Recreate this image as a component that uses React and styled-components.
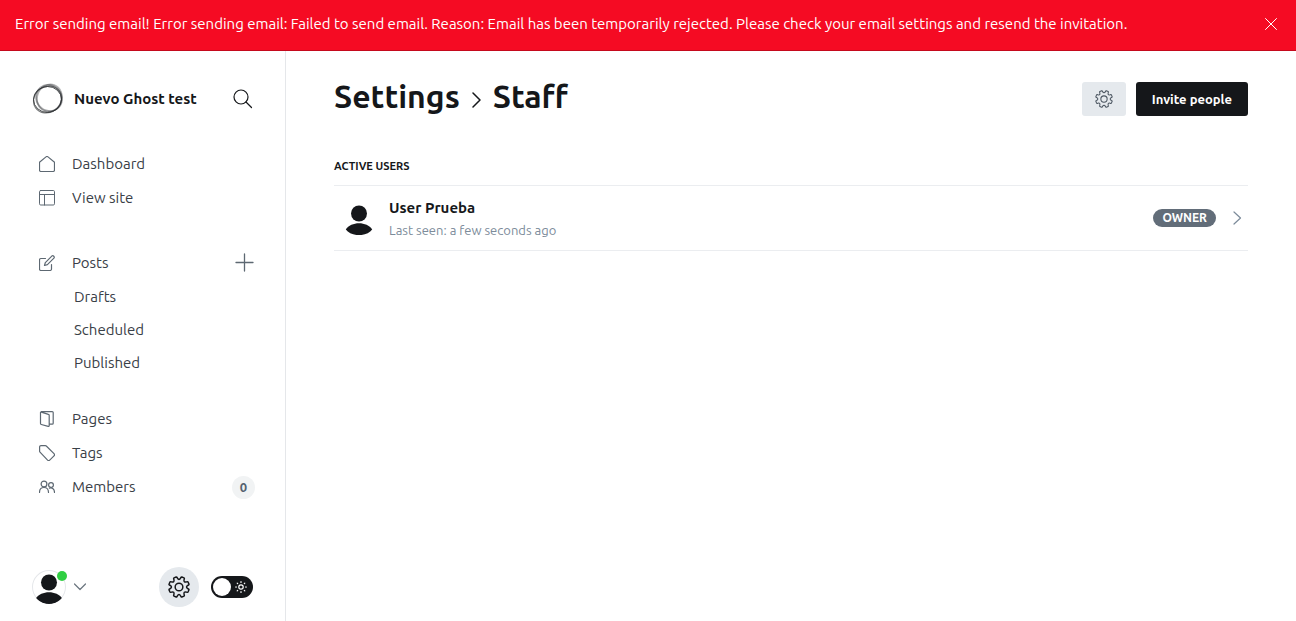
import React, { useState } from "react";
import styled, { createGlobalStyle, css } from "styled-components";

const Global = createGlobalStyle`
  *, *::before, *::after { box-sizing: border-box; }
  body {
    margin: 0;
    background: #fff;
    color: #15171a;
    font-family: Ubuntu, "Noto Sans", "Open Sans", sans-serif;
    font-size: 15px;
    line-height: 20px;
  }
  button { font: inherit; color: inherit; border: 0; padding: 0; background: none; cursor: pointer; }
  a { color: inherit; text-decoration: none; }
  svg { display: block; flex: none; }
  h1, h2, h3, p, ul { margin: 0; padding: 0; }
  ul { list-style: none; }
`;

const Page = styled.div`
  min-height: 100vh;
  display: flex;
  flex-direction: column;
`;

const Alert = styled.div`
  display: flex;
  align-items: center;
  justify-content: space-between;
  min-height: 51px;
  padding: 0 18px 2px 15px;
  background: #f50b23;
  border-bottom: 1px solid #c5091d;
  color: #fff;
`;

const AlertText = styled.p`
  font-size: 15px;
  line-height: 22px;
`;

const Body = styled.div`
  flex: 1;
  display: flex;
`;

const Sidebar = styled.aside`
  flex: none;
  width: 286px;
  display: flex;
  flex-direction: column;
  padding: 32px 32px 14px;
  border-right: 1px solid #e5e7ea;
  color: #394047;
`;

const SiteHeader = styled.header`
  display: flex;
  align-items: center;
  gap: 10px;
  height: 32px;
  color: #15171a;
`;

const SiteName = styled.strong`
  flex: 1;
  font-weight: 700;
  white-space: nowrap;
`;

const Nav = styled.nav`
  margin: 32px -2px 0 0;
`;

const NavGroup = styled.ul`
  margin-bottom: ${(p) => (p.$tight ? 23 : 31)}px;
`;

const NavRow = styled.li`
  display: flex;
  align-items: center;
  justify-content: space-between;
`;

const NavLink = styled.a`
  flex: 1;
  display: flex;
  align-items: center;
  gap: 17px;
  height: ${(p) => (p.$nested ? 33 : 34)}px;
  padding-left: ${(p) => (p.$nested ? 42 : 7)}px;
  svg { color: #5d6872; }
`;

const PlusButton = styled.button`
  color: #5d6872;
`;

const Count = styled.span`
  width: 23px;
  height: 23px;
  border-radius: 50%;
  background: #f1f3f4;
  color: #54626f;
  font-size: 13px;
  font-weight: 600;
  line-height: 23px;
  text-align: center;
`;

const SidebarFooter = styled.footer`
  display: flex;
  align-items: center;
  margin-top: auto;
  color: #15171a;
`;

const UserMenu = styled.button`
  display: flex;
  align-items: center;
  gap: 8px;
  margin-right: auto;
  color: #6b757f;
`;

const AvatarRing = styled.span`
  position: relative;
  width: 34px;
  height: 34px;
  border-radius: 50%;
  box-shadow: inset 0 0 0 1px #e5e7ea;
  svg { border-radius: 50%; }
`;

const OnlineDot = styled.span`
  position: absolute;
  top: 1px;
  right: -1px;
  width: 10px;
  height: 10px;
  border-radius: 50%;
  background: #30cf43;
`;

const RoundButton = styled.button`
  display: grid;
  place-items: center;
  width: 40px;
  height: 40px;
  margin-right: 12px;
  border-radius: 50%;
  background: #e5e9ed;
`;

const Switch = styled.label`
  position: relative;
  display: flex;
  align-items: center;
  justify-content: space-between;
  width: 42px;
  height: 22px;
  padding: 0 6px 0 2px;
  border-radius: 11px;
  background: #15171a;
  color: #fff;
  cursor: pointer;
`;

const SwitchInput = styled.input`
  position: absolute;
  inset: 0;
  width: 100%;
  height: 100%;
  margin: 0;
  opacity: 0;
  cursor: pointer;
`;

const Knob = styled.span`
  width: 18px;
  height: 18px;
  border-radius: 50%;
  background: #fff;
  order: ${(p) => (p.$on ? 1 : 0)};
`;

const Main = styled.main`
  flex: 1;
  min-width: 0;
  padding: 24px 48px;
`;

const TitleBar = styled.div`
  display: flex;
  align-items: center;
  justify-content: space-between;
  height: 48px;
`;

const Title = styled.h1`
  display: flex;
  align-items: center;
  gap: 12px;
  padding-bottom: 6px;
  font-size: 32px;
  font-weight: 700;
  line-height: 40px;
  svg { margin-top: 8px; }
`;

const Actions = styled.div`
  display: flex;
  gap: 10px;
`;

const buttonBase = css`
  height: 34px;
  border-radius: 3px;
`;

const IconButton = styled.button`
  ${buttonBase}
  display: grid;
  place-items: center;
  width: 44px;
  background: #e5e9ed;
  color: #4b5560;
`;

const PrimaryButton = styled.button`
  ${buttonBase}
  padding: 0 16px;
  background: #15171a;
  color: #fff;
  font-size: 13px;
  font-weight: 600;
`;

const SectionTitle = styled.h2`
  margin-top: 33px;
  padding-bottom: 8px;
  border-bottom: 1px solid #ebedf0;
  font-size: 11px;
  font-weight: 600;
  line-height: 21px;
  text-transform: uppercase;
`;

const UserRow = styled.a`
  display: flex;
  align-items: center;
  height: 65px;
  padding: 0 6px 0 8px;
  border-bottom: 1px solid #ebedf0;
  color: #7c8b9a;
`;

const UserText = styled.div`
  flex: 1;
  margin-left: 13px;
  padding-top: 2px;
`;

const UserName = styled.h3`
  color: #15171a;
  font-size: 15px;
  font-weight: 700;
  line-height: 22px;
`;

const LastSeen = styled.p`
  font-size: 13px;
  line-height: 22px;
`;

const Role = styled.span`
  margin-right: 17px;
  padding: 0 9px;
  border-radius: 9px;
  background: #626d79;
  color: #fff;
  font-size: 12px;
  font-weight: 600;
  line-height: 18px;
  text-transform: uppercase;
`;

const Icon = ({ size = 16, w = 1, box = size, children }) => (
  <svg width={size} height={size} viewBox={`0 0 ${box} ${box}`} fill="none" stroke="currentColor"
    strokeWidth={w} strokeLinecap="round" strokeLinejoin="round" aria-hidden="true">{children}</svg>
);

const Home = () => <Icon w={1.2}><path d="M.5 6.2V14A1.5 1.5 0 0 0 2 15.5h12a1.5 1.5 0 0 0 1.5-1.5V6.2L9 .9a1.6 1.6 0 0 0-2 0z" /></Icon>;
const Layout = () => <Icon><rect x=".5" y=".5" width="15" height="14.5" rx="1.2" /><path d="M.5 4.5h15M5.5 4.5V15" /></Icon>;
const Compose = () => <Icon w={1.2}><path d="M6.5 3.5H2A1.5 1.5 0 0 0 .5 5v9A1.5 1.5 0 0 0 2 15.5h9a1.5 1.5 0 0 0 1.5-1.5V9.5M5.5 10.5l.8-2.9 6.5-6.5a1.5 1.5 0 0 1 2.1 2.1l-6.5 6.5z" /></Icon>;
const Pages = () => <Icon w={1.2}><path d="M1.5 1.3v11.2a1 1 0 0 0 .8 1l6.9 1.9a.8.8 0 0 0 1-.8V4.3a1 1 0 0 0-.8-1L2.3 1.2A.4.4 0 0 1 2.4.6h10.8a1 1 0 0 1 1 1v10.6a1 1 0 0 1-1 1h-3" /></Icon>;
const Tag = () => <Icon w={1.2}><path d="M.6 5.6V2A1.4 1.4 0 0 1 2 .6h4.2a1.5 1.5 0 0 1 1.1.4l7.7 7.7a1.5 1.5 0 0 1 0 2.1l-4.3 4.3a1.5 1.5 0 0 1-2.1 0L1 7.2a1.5 1.5 0 0 1-.4-1.1z" /></Icon>;
const Members = () => <Icon w={1.2}><circle cx="5" cy="5" r="2.9" /><path d="M.5 13.5c0-3.2 1.8-5 4.5-5s4.5 1.8 4.5 5" /><circle cx="12" cy="6" r="2.4" /><path d="M10.3 9.2c3-.9 5.2 1 5.2 4.3" /></Icon>;

const gearPath = () => {
  const parts = [];
  for (let i = 0; i < 8; i += 1) {
    const at = (deg, r) => {
      const a = ((i * 45 + deg) * Math.PI) / 180;
      return `${(12 + r * Math.sin(a)).toFixed(2)} ${(12 - r * Math.cos(a)).toFixed(2)}`;
    };
    parts.push(`${i ? "L" : "M"}${at(-16, 11.3)}Q${at(-12, 11.4)} ${at(-11, 10)}Q${at(0, 6.6)} ${at(11, 10)}Q${at(12, 11.4)} ${at(16, 11.3)}`);
  }
  return `${parts.join("")}Z`;
};
const GEAR = gearPath();
const Gear = ({ size, w }) => <Icon size={size} box={24} w={w}><path d={GEAR} /><circle cx="12" cy="12" r="4.2" /></Icon>;

const Search = () => (
  <Icon size={20} w={1.2}><circle cx="8" cy="8" r="7" /><path d="M13 13l5.5 5.5" /></Icon>
);
const Plus = () => <Icon size={20} w={1.3}><path d="M9.5 1v17M1 9.5h17" /></Icon>;
const Close = () => <Icon size={14}><path d="M1.5 1.5l11 11M12.5 1.5l-11 11" /></Icon>;
const Sun = () => (
  <Icon size={12} w={1.2}><circle cx="6" cy="6" r="2.2" /><path d="M6 .6v.9M6 10.5v.9M.6 6h.9M10.5 6h.9M2.2 2.2l.5.5M9.3 9.3l.5.5M2.2 9.8l.5-.5M9.3 2.7l.5-.5" /></Icon>
);
const Chevron = ({ width, height, d, w = 1.2 }) => (
  <svg width={width} height={height} fill="none" stroke="currentColor" strokeWidth={w} strokeLinecap="round" strokeLinejoin="round" aria-hidden="true"><path d={d} /></svg>
);
const Person = () => (
  <svg width="34" height="34" viewBox="0 0 34 34" fill="#15171a" aria-hidden="true">
    <circle cx="17" cy="12.5" r="8" /><path d="M3.8 28.6C9 20.2 25 20.2 30.2 28.6C25 36 9 36 3.8 28.6z" />
  </svg>
);
const Logo = () => (
  <svg width="32" height="32" fill="none" stroke="#26292c" aria-hidden="true">
    <ellipse cx="15.5" cy="16.5" rx="14" ry="13" strokeWidth="1" opacity=".8" />
    <ellipse cx="15.5" cy="16.5" rx="14.5" ry="12.8" transform="rotate(-35 15.5 16.5)" strokeWidth="1.2" opacity=".6" />
    <ellipse cx="17" cy="15" rx="13.5" ry="12.5" transform="rotate(50 17 15)" strokeWidth="1.8" opacity=".4" />
    <ellipse cx="17.5" cy="15" rx="12.3" ry="13.8" transform="rotate(20 17.5 15)" strokeWidth="1.6" opacity=".35" />
  </svg>
);

const groups = [
  [{ label: "Dashboard", icon: Home }, { label: "View site", icon: Layout }],
  [{ label: "Posts", icon: Compose, add: true }, { label: "Drafts" }, { label: "Scheduled" }, { label: "Published" }],
  [{ label: "Pages", icon: Pages }, { label: "Tags", icon: Tag }, { label: "Members", icon: Members, count: 0 }],
];

export default function App() {
  const [night, setNight] = useState(false);
  return (
    <Page>
      <Global />
      <Alert role="alert">
        <AlertText>Error sending email! Error sending email: Failed to send email. Reason: Email has been temporarily rejected. Please check your email settings and resend the invitation.</AlertText>
        <button aria-label="Close"><Close /></button>
      </Alert>
      <Body>
        <Sidebar>
          <SiteHeader>
            <Logo />
            <SiteName>Nuevo Ghost test</SiteName>
            <button aria-label="Search"><Search /></button>
          </SiteHeader>
          <Nav>
            {groups.map((items) => (
              <NavGroup key={items[0].label} $tight={items.some((item) => !item.icon)}>
                {items.map(({ label, icon: Glyph, add, count }) => (
                  <NavRow key={label}>
                    <NavLink href="#" $nested={!Glyph}>{Glyph && <Glyph />}{label}</NavLink>
                    {add && <PlusButton aria-label="New post"><Plus /></PlusButton>}
                    {count !== undefined && <Count>{count}</Count>}
                  </NavRow>
                ))}
              </NavGroup>
            ))}
          </Nav>
          <SidebarFooter>
            <UserMenu aria-label="User menu">
              <AvatarRing><Person /><OnlineDot /></AvatarRing>
              <Chevron width={12} height={8} d="M.5 1l5.5 5.5L11.5 1" />
            </UserMenu>
            <RoundButton aria-label="Settings"><Gear size={22} w={1.6} /></RoundButton>
            <Switch>
              <SwitchInput type="checkbox" aria-label="Night mode" checked={night} onChange={() => setNight(!night)} />
              <Knob $on={night} />
              <Sun />
            </Switch>
          </SidebarFooter>
        </Sidebar>
        <Main>
          <TitleBar>
            <Title><a href="#">Settings</a><Chevron width={9} height={16} w={1.5} d="M1 1l7 7-7 7" />Staff</Title>
            <Actions>
              <IconButton aria-label="Staff options"><Gear size={18} w={1.4} /></IconButton>
              <PrimaryButton>Invite people</PrimaryButton>
            </Actions>
          </TitleBar>
          <SectionTitle>Active users</SectionTitle>
          <UserRow href="#">
            <Person />
            <UserText>
              <UserName>User Prueba</UserName>
              <LastSeen>Last seen: a few seconds ago</LastSeen>
            </UserText>
            <Role>Owner</Role>
            <Chevron width={9} height={14} d="M1 1l6.5 6L1 13" />
          </UserRow>
        </Main>
      </Body>
    </Page>
  );
}
